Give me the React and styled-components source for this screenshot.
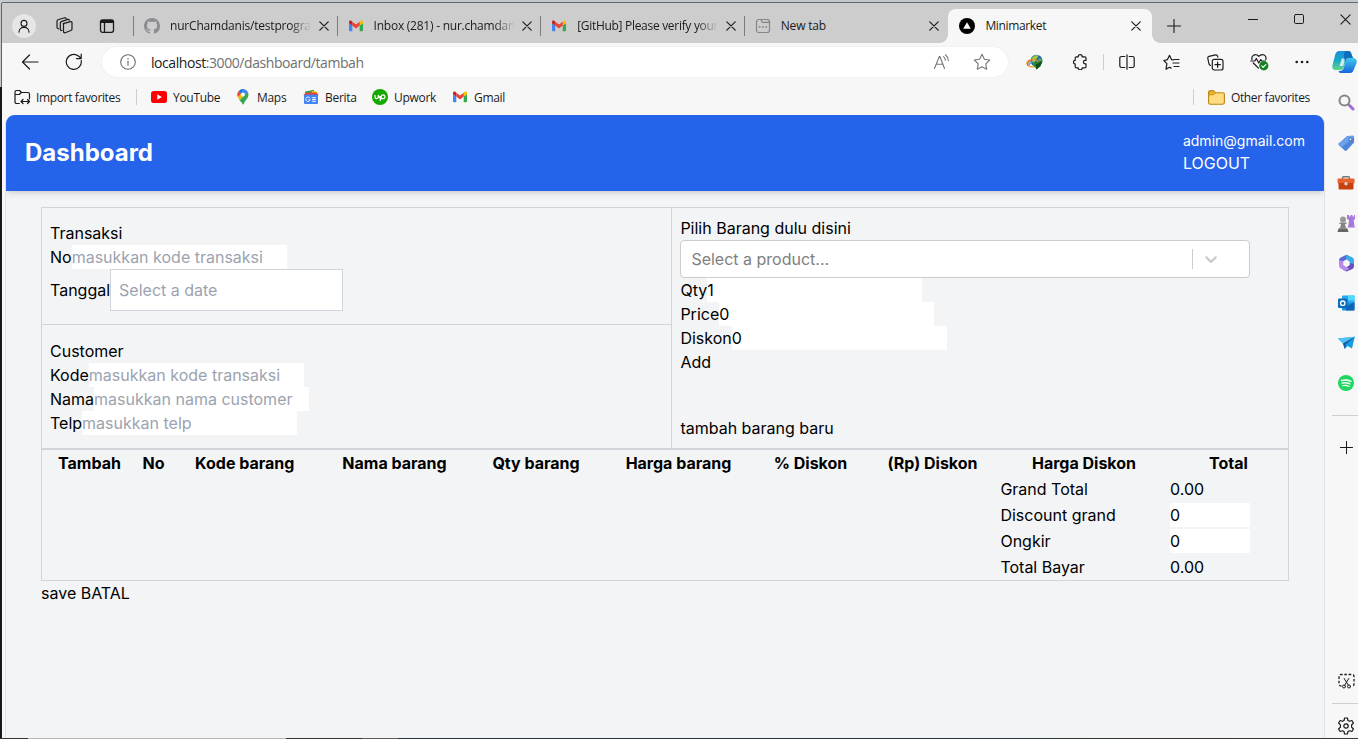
import React from 'react';
import styled, { createGlobalStyle, css } from 'styled-components';

const Global = createGlobalStyle`
  * { box-sizing: border-box; }
  html, body { margin: 0; padding: 0; overflow: hidden; }
  svg { display: block; flex: none; }
`;

const Desktop = styled.div`
  width: 1358px;
  height: 739px;
  padding: 2px 0 1px 2px;
  display: flex;
  background:
    linear-gradient(90deg, #38302e 0 28px, #b4b6b8 28px 286px, #38302e 286px 362px, #5d5b5c 362px 398px, #26333d 398px 900px, #3b3a32 1358px) 0 738px / 1358px 1px no-repeat,
    linear-gradient(90deg, transparent 1px, #5f6669 1px) 0 3px / 2px 84px no-repeat,
    linear-gradient(#c2cad0 87px, #17181a 87px);
`;

const Window = styled.div`
  flex: 1;
  min-width: 0;
  border-top: 1px solid #62696d;
  background: #f7f7f7;
  display: flex;
  flex-direction: column;
  font-family: "Open Sans", "Noto Sans", sans-serif;
  font-size: 12px;
  color: #1b1b1b;
`;

const TabStrip = styled.div`
  height: 40px;
  flex: none;
  background: #cdcdcd;
  display: flex;
  padding-left: 10px;
`;

const StripTools = styled.div`
  width: 122px;
  height: 45px;
  flex: none;
  display: flex;
  align-items: center;
`;

const Avatar = styled.div`
  width: 24px;
  height: 24px;
  flex: none;
  border-radius: 50%;
  background: #e6e6e6;
  display: grid;
  place-items: center;
  margin-right: 20px;
`;

const Tab = styled.div`
  position: relative;
  width: 203.6px;
  height: ${p => (p.$active ? 34 : 45)}px;
  margin-top: ${p => (p.$active ? 6 : 0)}px;
  padding: 0 ${p => (p.$active ? 10.5 : 9)}px 0 ${p => (p.$active ? 11 : 10)}px;
  display: flex;
  align-items: center;
  flex: none;
  ${p => p.$line && css`
    &::before {
      content: '';
      position: absolute;
      left: -1px;
      top: 13px;
      width: 1px;
      height: 20px;
      background: #7b7b7b;
    }
  `}
  ${p => p.$active && css`
    background: #f7f7f7;
    border-radius: 8px 8px 0 0;
    &::before, &::after {
      content: '';
      position: absolute;
      bottom: 0;
      width: 8px;
      height: 8px;
    }
    &::before {
      left: -8px;
      background: radial-gradient(circle at 0 0, transparent 7.5px, #f7f7f7 8px);
    }
    &::after {
      right: -8px;
      background: radial-gradient(circle at 100% 0, transparent 7.5px, #f7f7f7 8px);
    }
  `}
`;

const Label = styled.span`
  white-space: nowrap;
  letter-spacing: ${p => p.$ls || 0}px;
`;

const TabTitle = styled(Label)`
  flex: 1;
  min-width: 0;
  margin: 0 2px 0 10px;
  line-height: 18px;
  mask-image: ${p => (p.$fade ? 'linear-gradient(90deg, #000 120px, transparent 141px)' : 'none')};
`;

const NewTab = styled.div`
  width: 44px;
  height: 45px;
  display: grid;
  place-items: center;
`;

const Captions = styled.div`
  margin-left: auto;
  display: flex;
  height: 32px;
  margin-right: -10px;
`;

const CaptionButton = styled.div`
  width: 46px;
  display: grid;
  place-items: center;
`;

const Toolbar = styled.div`
  height: 38px;
  flex: none;
  display: flex;
  align-items: center;
`;

const NavButton = styled.div`
  width: ${p => p.$w || 44}px;
  height: 38px;
  display: grid;
  place-items: center;
  flex: none;
`;

const Address = styled.div`
  width: 906px;
  height: 30px;
  flex: none;
  margin-left: 12px;
  border-radius: 15px;
  background: #fff;
  box-shadow: 0 0 2px rgba(0, 0, 0, 0.08);
  display: flex;
  align-items: center;
  padding: 0 17px 0 18px;
  font-size: 14px;
  color: #6f6f6f;
  b { font-weight: 400; color: #1b1b1b; }
`;

const AddressText = styled(Label)`
  margin-left: 15px;
  flex: 1;
`;

const ToolLine = styled.i`
  width: 1px;
  height: 16px;
  background: #cfcfcf;
  flex: none;
  margin: ${p => p.$m || 0};
`;

const Body = styled.div`
  flex: 1;
  min-height: 0;
  display: flex;
`;

const Main = styled.div`
  width: 1323px;
  display: flex;
  flex-direction: column;
`;

const Favorites = styled.div`
  height: 34px;
  flex: none;
  display: flex;
  align-items: center;
  padding: 0 15px 2px 12px;
`;

const Favorite = styled.div`
  display: flex;
  align-items: center;
  gap: ${p => p.$gap || 6}px;
  width: ${p => p.$w}px;
  flex: none;
`;

const Page = styled.div`
  flex: 1;
  min-height: 0;
  margin: 0 0 0 3px;
  border: solid #e2e2e4;
  border-width: 0 1px 0 1px;
  border-radius: 9px 9px 0 0;
  overflow: hidden;
  background: #f3f4f6;
  font-family: Inter, sans-serif;
  font-size: 16px;
  line-height: 24px;
  color: #000;
`;

const Header = styled.header`
  height: 76px;
  padding: 16px 19px;
  background: #2563eb;
  color: #fff;
  display: flex;
  align-items: center;
  justify-content: space-between;
  box-shadow: 0 4px 6px -1px rgba(0, 0, 0, 0.1), 0 2px 4px -2px rgba(0, 0, 0, 0.1);
`;

const Title = styled.h1`
  margin: 0;
  font-size: 24px;
  line-height: 32px;
  font-weight: 700;
`;

const Account = styled.div`
  display: flex;
  flex-direction: column;
`;

const Email = styled.span`
  font-size: 14px;
  line-height: 20px;
`;

const Content = styled.main`
  margin: 16px 35px 0;
`;

const Panels = styled.section`
  display: grid;
  grid-template-columns: 630px 1fr;
  border: 1px solid #d1d5db;
`;

const PanelColumn = styled.div`
  display: flex;
  flex-direction: column;
  border-right: ${p => (p.$divided ? '1px solid #d1d5db' : 0)};
`;

const Panel = styled.div`
  padding: ${p => p.$pad};
  border-bottom: ${p => (p.$divided ? '1px solid #d1d5db' : 0)};
`;

const Field = styled.div`
  display: flex;
  align-items: center;
`;

const Input = styled.span`
  display: block;
  width: ${p => p.$w || 215}px;
  height: 24px;
  background: #fff;
  color: ${p => (p.$hint ? '#9ca3af' : '#000')};
  white-space: nowrap;
`;

const DateInput = styled(Input)`
  width: 233px;
  height: 42px;
  padding: 8px;
  border: 1px solid #d1d5db;
`;

const Select = styled.div`
  width: 570px;
  height: 38px;
  border: 1px solid #ccc;
  border-radius: 4px;
  background: #fff;
  color: #808080;
  display: flex;
  align-items: center;
  padding-left: 10px;
`;

const SelectLine = styled.i`
  width: 1px;
  height: 20px;
  margin-left: auto;
  background: #ccc;
`;

const SelectArrow = styled.div`
  width: 56px;
  padding-left: 8px;
`;

const ActionText = styled.div`
  margin-top: ${p => p.$top || 0}px;
`;

const Items = styled.section`
  border: 1px solid #d1d5db;
  padding: 1px 0 1px;
  display: flex;
  flex-direction: column;
  gap: 2px;
`;

const ItemHead = styled.div`
  display: grid;
  grid-template-columns: 95px 33px 149.5px 150px 133px 152px 112px 132px 171px 118px;
  font-weight: 700;
  text-align: center;
  white-space: nowrap;
`;

const SumRow = styled.div`
  display: grid;
  grid-template-columns: 169.6px 118px;
  padding-left: 958.4px;
`;

const Sidebar = styled.aside`
  flex: 1;
  display: flex;
  flex-direction: column;
  padding-left: 7px;
  overflow: hidden;
`;

const SideItem = styled.div`
  height: ${p => p.$h || 40}px;
  width: 28px;
  flex: none;
  margin-top: ${p => p.$top || 0}px;
  display: grid;
  place-items: center;
`;

const SideLine = styled.i`
  height: 1px;
  flex: none;
  background: #cfcfcf;
  margin-top: ${p => p.$top || 0}px;
`;

const Svg = ({ s = 16, w, h, vb = '0 0 16 16', color = '#1b1b1b', sw = 1.1, children }) => (
  <svg width={w || s} height={h || s} viewBox={vb} fill="none" stroke={color} strokeWidth={sw} strokeLinecap="round" strokeLinejoin="round">
    {children}
  </svg>
);

const Person = () => (
  <Svg s={14} vb="0 0 14 14" sw={1.1}>
    <circle cx="7" cy="4.4" r="3" />
    <path d="M2 13.2c0-3 2-4.8 5-4.8s5 1.800 5 4.800" />
  </Svg>
);
const Workspaces = () => (
  <Svg s={17} vb="0 0 17 17" sw={1.2}>
    <path d="M7.200 6.600 14.500 4.600q1.500-.3 1.500 1.200v6.200q0 1.200-1.200 1.500l-5.600 2.200q-1.700.4-1.700-1.200V7.800q0-1 .9-1.300Z" />
    <path d="M5.800 13.400q-1.500.2-1.500-1.300V6q0-1 1-1.400l6.500-2.200q1.200-.2 1.600.8" />
    <path d="M2.600 11.700Q1 11.700 1 10.300V4.200q0-1 1-1.400L8.700.8q1-.2 1.500.6" />
  </Svg>
);
const TabActions = () => (
  <Svg s={16} sw={1.3}>
    <rect x="1.500" y="1.800" width="13" height="12.500" rx="2" />
    <path d="M2.500 3.500h11" strokeWidth="2.800" />
    <path d="M5.500 5v9" />
  </Svg>
);
const GitHub = () => (
  <svg width="16" height="16" viewBox="0 0 16 16" fill="#8b8d90">
    <path d="M8 0C3.580 0 0 3.580 0 8c0 3.540 2.290 6.530 5.470 7.590.4.070.55-.17.55-.38 0-.19-.01-.82-.01-1.490-2.010.37-2.530-.49-2.690-.94-.09-.23-.48-.94-.82-1.130-.28-.15-.68-.52-.01-.53.63-.01 1.080.58 1.230.82.72 1.210 1.870.87 2.330.66.07-.52.28-.87.51-1.070-1.780-.2-3.640-.89-3.640-3.950 0-.87.31-1.590.82-2.150-.08-.2-.36-1.020.08-2.120 0 0 .67-.21 2.200.82.64-.18 1.320-.27 2-.27s1.360.09 2 .27c1.530-1.040 2.200-.82 2.200-.82.44 1.100.16 1.920.08 2.120.51.56.82 1.270.82 2.150 0 3.070-1.870 3.750-3.650 3.950.29.25.54.73.54 1.480 0 1.070-.01 1.930-.01 2.200 0 .21.15.46.55.38A8.010 8.010 0 0 0 16 8c0-4.420-3.580-8-8-8Z" />
  </svg>
);
const GmailIcon = () => (
  <svg width="16" height="16" viewBox="0 0 16 16">
    <path d="M1 5v7.300q0 .9.900.9h2.400V7.500Z" fill="#4285f4" />
    <path d="M15 5v7.300q0 .9-.9.900h-2.400V7.500Z" fill="#34a853" />
    <path d="M11.700 3.800v3.800L15 5.200V4c0-1.500-1.500-1.900-2.500-1.100Z" fill="#fbbc04" />
    <path d="M4.300 7.600V3.700L8 6.500l3.700-2.800v3.900L8 10.400Z" fill="#ea4335" />
    <path d="M1 4v1.200l3.300 2.400V3.700l-.8-.7C2.500 2.200 1 2.700 1 4Z" fill="#c5221f" />
  </svg>
);
const NewTabIcon = () => (
  <Svg s={16} color="#858585" sw={1.2}>
    <rect x="1.500" y="1.500" width="13" height="13" rx="2.200" />
    <path d="M6.500 1.500v1.600q0 1.200 1.200 1.200h6.800" />
    <path d="M3.800 9h1.700M7.100 9h1.700M10.400 9h1.700" strokeWidth="1.600" strokeLinecap="butt" />
  </Svg>
);
const Minimarket = () => (
  <svg width="16" height="16" viewBox="0 0 16 16">
    <circle cx="8" cy="8" r="8" fill="#000" />
    <path d="M8 4.300 11.800 10.700H4.200Z" fill="#fff" />
  </svg>
);
const Close = ({ s = 10 }) => (
  <Svg s={s} vb="0 0 10 10" sw={s > 10 ? 1 : 1.2}><path d="m.8.8 8.400 8.400M9.200.8.8 9.200" /></Svg>
);
const Plus = ({ s = 14 }) => (
  <Svg s={s} vb="0 0 14 14" sw={1.100}><path d="M7 .5v13M.5 7h13" /></Svg>
);
const Back = () => <Svg s={18} vb="0 0 18 18" sw={1.200}><path d="M17 9H1.500M8.500 2 1.500 9l7 7" /></Svg>;
const Reload = () => (
  <Svg s={18} vb="0 0 18 18" sw={1.200}>
    <path d="M16.200 7.500A7.500 7.500 0 1 1 13.500 3L16 5.300M16.200 1v4.600h-4.700" />
  </Svg>
);
const Info = () => (
  <Svg s={16} color="#6f6f6f"><circle cx="8" cy="8" r="7.300" /><path d="M8 7.200v4" /><path d="M8 4.700v.1" strokeWidth="1.500" /></Svg>
);
const ReadAloud = () => (
  <Svg s={18} vb="0 0 18 18" color="#767676">
    <path d="M1.500 15.500 6.300 3.500h.6l4.600 12M3.200 11.300h6.700" />
    <path d="M10.500 3.600q1.700 1.300 1.800 3.600M12.400 1.800q2.800 2.200 2.900 5.800" />
  </Svg>
);
const Star = () => (
  <Svg s={18} vb="0 0 18 18" color="#767676">
    <path d="m9 1.300 2.400 4.900 5.300.8-3.900 3.800.9 5.400L9 13.700l-4.700 2.500.9-5.400L1.300 7l5.300-.8Z" />
  </Svg>
);
const Idm = () => (
  <svg width="18" height="16" viewBox="0 0 18 16">
    <circle cx="10.500" cy="6.800" r="6" fill="#1e62b8" />
    <path d="M6 3.500q3-3 6-2.400 1 2-1 3.200T9 7.500 5 7Z" fill="#9fc53c" />
    <path d="M12.500 4q2.500 0 3.600 2-.5 1.700-2.300 1.400T12.500 4Z" fill="#5fae3c" />
    <ellipse cx="7" cy="9.300" rx="6.200" ry="3.600" fill="none" stroke="#e8a02d" strokeWidth="1.300" />
    <path d="M1.800 11.500Q.8 7 6.500 6.200" fill="none" stroke="#e2562d" strokeWidth="1.200" />
    <path d="M3.200 11.300Q3 8.500 7 8" fill="none" stroke="#3fa9dc" strokeWidth="1.300" />
    <path d="m6 8.500 4-.5 6-1-1.500 5-4 3.500Z" fill="#2c8b2c" />
    <path d="m9.500 10.500 6.500-3.500-1.500 5-4 3.500Z" fill="#11501a" />
  </svg>
);
const Puzzle = () => (
  <Svg s={16} sw={1.200}>
    <path d="M6.200 2.900V2.700a2 2 0 0 1 4 0v.2h2.600q1.200 0 1.200 1.200v2.300h-.9a1.700 1.700 0 0 0 0 3.400h.9v2.900q0 1.200-1.200 1.200h-2.600a2 2 0 0 1-4 0H4.400q-1.200 0-1.200-1.200V9.900H2.800a1.800 1.800 0 0 1 0-3.500h.4V4.100q0-1.200 1.200-1.200Z" />
  </Svg>
);
const Split = () => (
  <Svg s={16} sw={1.200}>
    <path d="M5.800 2.500H2.500q-1.700 0-1.700 1.700v7.600q0 1.700 1.700 1.700h3.300M10.200 2.500h3.300q1.700 0 1.700 1.700v7.600q0 1.700-1.700 1.700h-3.300M8 .8v14.400" />
  </Svg>
);
const FavList = () => (
  <Svg s={17} vb="0 0 17 17" sw={1.200}>
    <path d="M10.500 6 8.600 5.700 6.500 1.300 4.400 5.700.8 6.500l3.100 3.100-.9 5.500 3.600-1.800 1.500.8M11 5.500h5M10 9h6M11 12.500h5" />
  </Svg>
);
const Collections = () => (
  <Svg s={17} vb="0 0 17 17" sw={1.200}>
    <rect x="5.300" y="5.300" width="10.700" height="10.700" rx="2" />
    <path d="M10.600 8v5.300M8 10.700h5.300M3.500 11.500Q2.300 11 2 10L.8 4.300q-.2-1.500 1.200-2L8.500.8q1.700-.2 2.100 1.400l.2.900" />
  </Svg>
);
const Health = () => (
  <svg width="19" height="18" viewBox="0 0 19 18" fill="none" stroke="#1b1b1b" strokeWidth="1.200" strokeLinejoin="round" strokeLinecap="round">
    <path d="M2 6.500C1 3 5-.3 8.800 3.300 12.500-.3 17 2.500 15.800 6.500M3.300 10l5.200 5.200" />
    <path d="M.8 8h4l1.500-2.500L8.800 10l2-3.500.8 1.500h4" />
    <circle cx="13.800" cy="12.800" r="4.600" fill="#13831c" stroke="none" />
    <path d="m11.800 12.900 1.400 1.400 2.600-2.700" stroke="#fff" />
  </svg>
);
const More = () => (
  <svg width="14" height="4" viewBox="0 0 14 4" fill="#1b1b1b"><circle cx="1.700" cy="2" r="1.300" /><circle cx="7" cy="2" r="1.300" /><circle cx="12.300" cy="2" r="1.300" /></svg>
);
const Copilot = () => (
  <svg width="25" height="24" viewBox="0 0 25 24">
    <defs>
      <linearGradient id="cpA" x1="0" y1="0" x2="0" y2="1"><stop offset="0" stopColor="#1b8fe0" /><stop offset=".5" stopColor="#18a9c4" /><stop offset="1" stopColor="#63d58c" /></linearGradient>
      <linearGradient id="cpB" x1="0" y1="0" x2="0" y2="1"><stop offset="0" stopColor="#42c9ee" /><stop offset="1" stopColor="#1566dc" /></linearGradient>
    </defs>
    <path d="M7 1h9c2.500 0 3 1.500 3.800 4L21 8h-4c-2 0-2.700 1-3.200 2.500l-2 6.500c-.6 2-1.500 3-3.800 3H4c-3 0-4.300-2-3.500-5L3 5.500C3.800 2.500 4.800 1 7 1Z" fill="url(#cpA)" />
    <path d="M18 23H9c-1.500 0-2-.6-2.500-2 3.500 0 4.600-1 5.300-3.500l2-7C14.400 8.600 15.500 8 17 8h4c3 0 4.300 2 3.500 5L22 19c-.8 2.600-1.800 4-4 4Z" fill="url(#cpB)" />
    <path d="M9.800 8.500h3.700l-2.300 7.500H7.500Z" fill="#fff" opacity=".75" />
    <path d="M16 1c2.500 0 3 1.500 3.800 4L21 8h-4c-1.500 0-2.600.6-3.200 2.500L13 13l-.8-5c-.8-2.500.2-7 2.300-7Z" fill="#0b5fb4" opacity=".75" />
  </svg>
);
const ImportIcon = () => (
  <Svg s={17} vb="0 0 17 17" sw={1.200}>
    <path d="M5.300 14.500H2.800Q1 14.500 1 12.700V3.300Q1 1.500 2.800 1.500h2.700l2 2h6.200q1.800 0 1.800 1.800v4.500M1.300 5.500h4l2-2M9 10.500 7 12.500l2 2M13.500 10.500l2 2-2 2M7.300 12.500h8" />
  </Svg>
);
const YouTube = () => (
  <svg width="16" height="12" viewBox="0 0 16 12"><rect width="16" height="12" rx="2.800" fill="#f00" /><path d="m6.300 3.300 4.500 2.700-4.500 2.700Z" fill="#fff" /></svg>
);
const MapsIcon = () => (
  <svg width="16" height="16" viewBox="0 0 16 16">
    <path d="M3.500 2.200 6.200 4.500 3 8.300Q1.400 5 3.500 2.200Z" fill="#ea4335" />
    <path d="M3.500 2.200Q6 -.5 9.600.3L6.200 4.500Z" fill="#1a73e8" />
    <path d="M9.600.3q2.200.6 3.300 2.600L9.500 6.800 6.200 4.500Z" fill="#4285f4" />
    <path d="M3 8.300 6.300 4.400q-.5 2.400 1.700 3l-3.500 4Q3.500 9.500 3 8.300Z" fill="#fbbc04" />
    <path d="M12.900 2.900q1.300 3-.4 6Q9 13 8.600 15.300q-.4.900-.9 0-.5-2-3.200-3.900l5-5.500Z" fill="#34a853" />
    <circle cx="8" cy="5.500" r="1.900" fill="#fff" />
  </svg>
);
const News = () => (
  <svg width="16" height="16" viewBox="0 0 16 16">
    <path d="m2 2.500 9-1.800.5 5H2Z" fill="#34a853" />
    <path d="m9 1.800 5.500 1.200-1 4H8Z" fill="#fbbc04" />
    <path d="M.5 5.500 4 3.500h9l2.500 2-1 2H1.500Z" fill="#ea4335" />
    <rect x="1" y="5.500" width="14" height="9.500" rx="1" fill="#4285f4" />
    <path d="M7 9.300a2.200 2.200 0 1 0 .1 1.600H5.500M9.200 8.700h3.600M9.200 10.500h3.600M9.200 12.300h3.600" fill="none" stroke="#fff" />
  </svg>
);
const Upwork = () => (
  <svg width="16" height="16" viewBox="0 0 16 16">
    <circle cx="8" cy="8" r="8" fill="#14a800" />
    <path d="M3 6v2a1.600 1.600 0 0 0 3.200 0V6Q7 9 8.700 9.700M8 12l1.200-4.200A1.900 1.900 0 1 1 11 9.700Q9 9.700 7.800 7" fill="none" stroke="#fff" strokeWidth="1.200" />
  </svg>
);
const Folder = () => (
  <svg width="17" height="15" viewBox="0 0 17 15">
    <path d="M.6 12.500V2.300Q.6.700 2.200.7h3.200L7.500 2.800h7.300q1.600 0 1.600 1.600v8.200q0 1.600-1.600 1.600H2.200Q.6 14.200.6 12.500Z" fill="#ffdd82" stroke="#b8860f" strokeWidth="1.100" />
    <path d="M.8 4.800h4.700l2-2L5.400.9H2.200Q.8.900.8 2.300Z" fill="#f0b323" stroke="#b8860f" strokeWidth=".8" />
  </svg>
);
const SearchIcon = () => (
  <svg width="17" height="17" viewBox="0 0 17 17" fill="none">
    <circle cx="6.500" cy="6.500" r="5" stroke="#858585" strokeWidth="2" />
    <path d="m10.300 10.300 1.500 1.500" stroke="#777" strokeWidth="2" />
    <path d="m11.800 11.800 3.200 3.200" stroke="#a36ad6" strokeWidth="3" strokeLinecap="round" />
  </svg>
);
const TagIcon = () => (
  <svg width="17" height="17" viewBox="0 0 17 17">
    <path d="m9.300 1 5.500-.2q1.300 0 1.300 1.300L16 7.500 8.700 15.600q-1 .9-2 0L1 10.200q-1-1 0-2Z" fill="#4f86d9" />
    <path d="m9.300 1 5.500-.2q1.300 0 1.300 1.300L3.500 12.600 1 10.200q-1-1 0-2Z" fill="#6da0ea" />
    <circle cx="12.500" cy="4.300" r="1.400" fill="#e6effb" stroke="#2c56a5" strokeWidth=".8" />
  </svg>
);
const Toolbox = () => (
  <svg width="18" height="14" viewBox="0 0 18 14">
    <path d="M5.500 3V1.800q0-1 1-1h5q1 0 1 1V3" fill="none" stroke="#777" strokeWidth="1.400" />
    <rect x=".5" y="2.500" width="17" height="5" rx="1" fill="#e8602c" />
    <path d="M1.500 7h15v5.500q0 1-1 1h-13q-1 0-1-1Z" fill="#c9400f" />
    <circle cx="9" cy="7.800" r="1.700" fill="#d8d8d8" />
  </svg>
);
const Chess = () => (
  <svg width="18" height="19" viewBox="0 0 18 19">
    <path d="M10 1h2v1.500h1.500V1h2v1.500H17V1h1v4l-1.300 1 .6 5.500.7 2h-7.500l.8-2L12 6l-2-1Z" fill="#a779dc" />
    <circle cx="6" cy="5.500" r="3" fill="#9a9a9a" />
    <path d="M2.500 8.500h7v1.500H8q0 3 2 4.500H2q2-1.500 2-4.500H2.500Z" fill="#848484" />
    <path d="M1.500 14.500h9l1 3.500H.5Z" fill="#666" />
  </svg>
);
const M365 = () => (
  <svg width="17" height="18" viewBox="0 0 17 18">
    <path d="M8.500.8 14 3.500q2 1 2 3v3L11 7.500 8.500 5.500 5 7.500 1 10V6.500q0-2 1.700-3Z" fill="#5b6ad8" />
    <path d="M8.500.8 14 3.500q2 1 2 3v5l-4.500-1.500V7L8 5Z" fill="#36aee8" />
    <path d="M16 10v2q0 2-1.500 3l-6 2.500-4-2 7-4.500V9Z" fill="#6950b8" />
    <path d="M1 6.500v5.300q0 1.700 1.500 2.500L7 17.200l4.300-2.500L5.500 11V7Z" fill="#b68bea" />
    <path d="M5.500 7.500 8.500 5.600l3 1.900v3.500l-3 1.900-3-1.900Z" fill="#f7f7f7" />
  </svg>
);
const Outlook = () => (
  <svg width="17" height="16" viewBox="0 0 17 16">
    <path d="M5 .5h10.500q1 0 1 1V8H4V1.500q0-1 1-1Z" fill="#28a8ea" />
    <path d="M10 .5h6.500v5H10Z" fill="#50d9ff" />
    <path d="M4 8h12.500v6.500q0 1-1 1H5q-1 0-1-1Z" fill="#1490df" />
    <path d="M8 11.500 16.500 7v7.500q0 1-1 1H8Z" fill="#1066b5" />
    <rect x="0" y="3.500" width="9.500" height="9.500" rx="1" fill="#0a6cbd" />
    <circle cx="4.750" cy="8.200" r="2.200" fill="none" stroke="#fff" strokeWidth="1.300" />
  </svg>
);
const Plane = () => (
  <svg width="17" height="14" viewBox="0 0 17 14">
    <path d="M0 2.500 16.800.8 14 12.500 9.500 10 6.800 13 5 7.500Z" fill="#1a9be0" />
    <path d="M0 2.500 16.800.8 5 7.500Z" fill="#4fc1f2" />
    <path d="M5 7.500 16.800.8 8 8.200 6.800 13Z" fill="#105c9c" />
  </svg>
);
const Spotify = () => (
  <svg width="16" height="16" viewBox="0 0 16 16" fill="none" stroke="#fff" strokeLinecap="round">
    <circle cx="8" cy="8" r="8" fill="#1ed760" stroke="none" />
    <path d="M3.500 5.500q5-1.500 9.300.8" strokeWidth="1.500" />
    <path d="M4 8.200q4.300-1.200 8 .8" strokeWidth="1.300" />
    <path d="M4.500 10.700q3.500-.9 6.700.8" strokeWidth="1.100" />
  </svg>
);
const Snip = () => (
  <Svg s={17} vb="0 0 17 17" sw={1.300}>
    <path d="M3.500 13Q1 13 1 11V3.500Q1 1.500 3 1.500h11q2 0 2 2V11q0 2-2 2" strokeDasharray="2.600 1.700" strokeLinecap="butt" />
    <path d="m6.200 5.500 4 6.500M10.800 5.500 6.800 12" strokeWidth="1" />
    <circle cx="6" cy="13.500" r="1.500" strokeWidth="1" /><circle cx="11" cy="13.500" r="1.500" strokeWidth="1" />
  </Svg>
);
const Gear = () => (
  <Svg s={18} vb="0 0 18 18" sw={1.200}>
    <path d="M7.600 1h2.800l.6 2.500 1.400.8 2.500-.8L16.400 6l-1.800 1.900v2.200l1.800 1.900-1.500 2.500-2.500-.8-1.400.8-.6 2.500H7.600L7 14.500l-1.400-.8-2.500.8L1.600 12l1.800-1.900V7.900L1.600 6l1.500-2.500 2.500.8L7 3.500Z" />
    <circle cx="9" cy="9" r="2.200" />
  </Svg>
);

const tabs = [
  { icon: <GitHub />, title: 'nurChamdanis/testprogra', fade: true, ls: -0.2 },
  { icon: <GmailIcon />, title: 'Inbox (281) - nur.chamdan', fade: true, ls: -0.24 },
  { icon: <GmailIcon />, title: '[GitHub] Please verify your', fade: true, ls: -0.3 },
  { icon: <NewTabIcon />, title: 'New tab', ls: -0.2 },
  { icon: <Minimarket />, title: 'Minimarket', active: true, ls: -0.35 },
];

const favorites = [
  { icon: <YouTube />, title: 'YouTube', w: 84 },
  { icon: <MapsIcon />, title: 'Maps', w: 68 },
  { icon: <News />, title: 'Berita', w: 69 },
  { icon: <Upwork />, title: 'Upwork', w: 80 },
  { icon: <GmailIcon />, title: 'Gmail', w: 60 },
];

const heads = ['Tambah', 'No', 'Kode barang', 'Nama barang', 'Qty barang', 'Harga barang', '% Diskon', '(Rp) Diskon', 'Harga Diskon', 'Total'];

const customer = [
  ['Kode', 'masukkan kode transaksi'],
  ['Nama', 'masukkan nama customer'],
  ['Telp', 'masukkan telp'],
];
const product = [['Qty', '1'], ['Price', '0'], ['Diskon', '0']];
const sums = [['Grand Total', '0.00'], ['Discount grand', '0', true], ['Ongkir', '0', true], ['Total Bayar', '0.00']];

export default function App() {
  return (
    <Desktop>
      <Global />
      <Window>
        <TabStrip>
          <StripTools>
            <Avatar><Person /></Avatar>
            <Workspaces />
            <NavButton $w={67}><TabActions /></NavButton>
          </StripTools>
          {tabs.map((t, i) => (
            <Tab key={i} $active={t.active} $line={!t.active}>
              {t.icon}
              <TabTitle $ls={t.ls} $fade={t.fade}>{t.title}</TabTitle>
              <Close />
            </Tab>
          ))}
          <NewTab><Plus /></NewTab>
          <Captions>
            <CaptionButton><Svg s={10} vb="0 0 10 10" sw={1}><path d="M0 5.500h10" /></Svg></CaptionButton>
            <CaptionButton><Svg s={10} vb="0 0 10 10" sw={1}><rect x=".5" y=".5" width="9" height="9" rx="1.200" /></Svg></CaptionButton>
            <CaptionButton><Close s={11} /></CaptionButton>
          </Captions>
        </TabStrip>
        <Toolbar>
          <NavButton $w={56}><Back /></NavButton>
          <NavButton $w={32}><Reload /></NavButton>
          <Address>
            <Info />
            <AddressText $ls={-0.43}><b>localhost</b>:3000/dashboard/tambah</AddressText>
            <ReadAloud />
            <NavButton $w={22} />
            <Star />
          </Address>
          <NavButton $w={54}><Idm /></NavButton>
          <NavButton $w={35}><Puzzle /></NavButton>
          <ToolLine $m="0 1px 0 6px" />
          <NavButton><Split /></NavButton>
          <NavButton><FavList /></NavButton>
          <NavButton><Collections /></NavButton>
          <NavButton><Health /></NavButton>
          <NavButton $w={42}><More /></NavButton>
          <NavButton $w={42}><Copilot /></NavButton>
        </Toolbar>
        <Body>
          <Main>
            <Favorites>
              <Favorite $w={122} $gap={5}><ImportIcon /><Label $ls={-0.35}>Import favorites</Label></Favorite>
              <ToolLine $m="0 14px 0 0" />
              {favorites.map(f => (
                <Favorite key={f.title} $w={f.w}>{f.icon}<Label $ls={-0.3}>{f.title}</Label></Favorite>
              ))}
              <ToolLine $m="0 14px 0 auto" />
              <Favorite><Folder /><Label $ls={-0.35}>Other favorites</Label></Favorite>
            </Favorites>
            <Page>
              <Header>
                <Title>Dashboard</Title>
                <Account>
                  <Email>admin@gmail.com</Email>
                  <span>LOGOUT</span>
                </Account>
              </Header>
              <Content>
                <Panels>
                  <PanelColumn $divided>
                    <Panel $pad="13px 8px 13px" $divided>
                      <div>Transaksi</div>
                      <Field>No<Input $hint>masukkan kode transaksi</Input></Field>
                      <Field>Tanggal<DateInput $hint>Select a date</DateInput></Field>
                    </Panel>
                    <Panel $pad="14px 8px 13px">
                      <div>Customer</div>
                      {customer.map(([k, v]) => <Field key={k}>{k}<Input $hint>{v}</Input></Field>)}
                    </Panel>
                  </PanelColumn>
                  <PanelColumn>
                    <Panel $pad="8px 8px 8px 8.4px">
                      <div>Pilih Barang dulu disini</div>
                      <Select>
                        Select a product...
                        <SelectLine />
                        <SelectArrow>
                          <svg width="20" height="20" viewBox="0 0 20 20" fill="#ccc">
                            <path d="M4.516 7.548c.436-.446 1.043-.481 1.576 0L10 11.295l3.908-3.747c.533-.481 1.141-.446 1.574 0 .436.445.408 1.197 0 1.615-.406.418-4.695 4.502-4.695 4.502a1.095 1.095 0 0 1-1.576 0S4.924 9.581 4.516 9.163c-.409-.418-.436-1.170 0-1.615Z" />
                          </svg>
                        </SelectArrow>
                      </Select>
                      {product.map(([k, v]) => <Field key={k}>{k}<Input>{v}</Input></Field>)}
                      <ActionText>Add</ActionText>
                      <ActionText $top={42}>tambah barang baru</ActionText>
                    </Panel>
                  </PanelColumn>
                </Panels>
                <Items>
                  <ItemHead>{heads.map(h => <span key={h}>{h}</span>)}</ItemHead>
                  {sums.map(([k, v, edit]) => (
                    <SumRow key={k}>
                      <span>{k}</span>
                      {edit ? <Input $w={80}>{v}</Input> : <span>{v}</span>}
                    </SumRow>
                  ))}
                </Items>
                <div>save BATAL</div>
              </Content>
            </Page>
          </Main>
          <Sidebar>
            <SideItem $h={42}><SearchIcon /></SideItem>
            <SideItem><TagIcon /></SideItem>
            <SideItem><Toolbox /></SideItem>
            <SideItem><Chess /></SideItem>
            <SideItem><M365 /></SideItem>
            <SideItem><Outlook /></SideItem>
            <SideItem><Plane /></SideItem>
            <SideItem><Spotify /></SideItem>
            <SideLine $top={12} />
            <SideItem $h={62}><Plus s={13} /></SideItem>
            <SideItem $top={182} $h={43}><Snip /></SideItem>
            <SideLine />
            <SideItem $h={44}><Gear /></SideItem>
          </Sidebar>
        </Body>
      </Window>
    </Desktop>
  );
}
